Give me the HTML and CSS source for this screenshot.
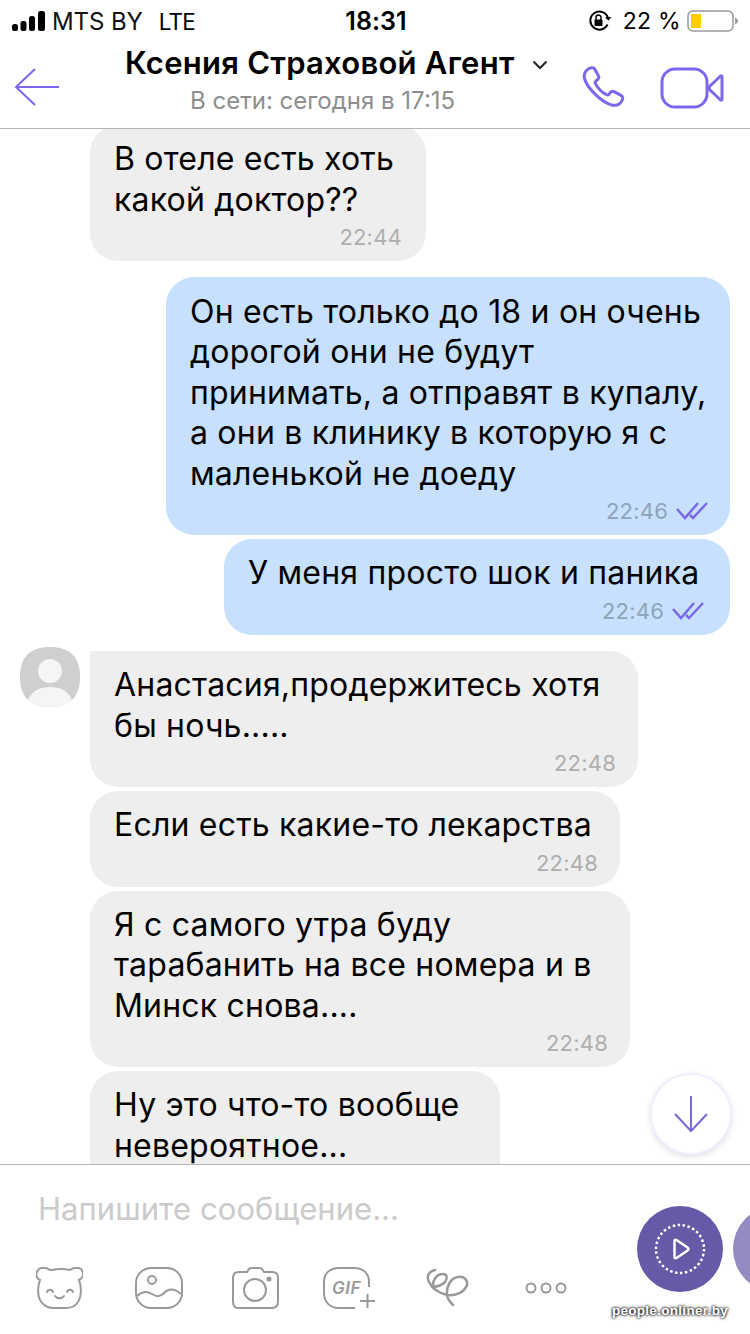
FILE: index.html
```html
<!DOCTYPE html>
<html lang="ru">
<head>
<meta charset="utf-8">
<title>Чат</title>
<link rel="stylesheet" href="styles.css">
</head>
<body>
<div class="app">
  <div class="status">
    <div class="status-left">
      <svg class="signal" width="36" height="22" viewBox="0 0 36 22"><rect x="2" y="14" width="6" height="7" rx="2.500"/><rect x="10.500" y="11" width="6" height="10" rx="2.500"/><rect x="19" y="6" width="6" height="15" rx="2.500"/><rect x="28" y="1" width="7" height="20" rx="2.500"/></svg>
      <span class="carrier">MTS BY</span>
      <span class="net">LTE</span>
    </div>
    <div class="status-time">18:31</div>
    <div class="status-right">
      <svg class="lock" width="24" height="22" viewBox="0 0 24 22" fill="none" stroke="#000" stroke-width="2"><path d="M19.500 14.500A9 9 0 1 1 20 8"/><path d="M17 7.500l3.500 3 3-3.500" fill="#000" stroke="none"/><rect x="6.500" y="9.500" width="8" height="6.500" rx="1" fill="#000" stroke="none"/><path d="M8 10V7.500a2.500 2.500 0 0 1 5 0V10" stroke-width="1.500"/></svg>
      <span class="pct">22 %</span>
      <svg class="battery" width="54" height="24" viewBox="0 0 54 24"><rect x="1" y="2" width="45" height="20" rx="5" fill="none" stroke="#999" stroke-width="1.500"/><rect x="4" y="5" width="10" height="14" fill="#fc0"/><path d="M48 8.500a4 4 0 0 1 3 3.500 4 4 0 0 1-3 3.500z" fill="#999"/></svg>
    </div>
  </div>

  <header class="nav">
    <svg class="back" width="46" height="40" viewBox="0 0 46 40" fill="none" stroke="#7b68ee" stroke-width="2"><path d="M21 2 2 20l19 18M2 20h43"/></svg>
    <div class="peer">
      <div class="peer-name"><span>Ксения Страховой Агент</span>
        <svg class="chev" width="16" height="10" viewBox="0 0 16 10" fill="none" stroke="#222" stroke-width="2"><path d="M1.500 1.500 8 8l6.500-6.500"/></svg>
      </div>
      <div class="peer-seen">В сети: сегодня в 17:15</div>
    </div>
    <svg class="phone" width="44" height="44" viewBox="0 0 44 44" fill="none" stroke="#7b68ee" stroke-width="3" stroke-linejoin="round"><path d="M7 2.500c3-1.500 5-1 6 1l3.500 6.500c.8 1.500.3 2.500-.8 3.500l-2 1.700c-.7.700-.8 1.500-.3 2.500 2.500 5 6 8.500 11 11 1.200.5 2 .3 2.600-.4l1.500-1.900c1-1.200 2-1.500 3.500-.8l7 3.800c2 1.100 2.300 3 .8 5.500-2 3.300-5 5-9 4.300C20 37 5 22 2.500 12.500 1.500 8 3.500 4.500 7 2.500z"/></svg>
    <svg class="video" width="64" height="44" viewBox="0 0 64 44" fill="none" stroke="#7b68ee" stroke-width="3" stroke-linejoin="round"><rect x="2" y="3" width="45" height="38" rx="13"/><path d="M62 11v22q0 2-2 .5L50 24q-2-2 0-4l10-9.500q2-1.500 2 .5z"/></svg>
  </header>

  <main class="chat">
    <div class="msg in w336 first">
      <p>В отеле есть хоть<br>какой доктор??</p>
      <div class="meta"><time>22:44</time></div>
    </div>
    <div class="msg out w564 gap">
      <p>Он есть только до 18 и он очень<br>дорогой они не будут<br>принимать, а отправят в купалу,<br>а они в клинику в которую я с<br>маленькой не доеду</p>
      <div class="meta"><time>22:46</time><svg class="ticks" width="32" height="20" viewBox="0 0 32 20" fill="none" stroke="#7b68ee" stroke-width="2.500"><path d="M1 8l8 9L22 2M14 14l3 3L31 2"/></svg></div>
    </div>
    <div class="msg out w506">
      <p>У меня просто шок и паника</p>
      <div class="meta"><time>22:46</time><svg class="ticks" width="32" height="20" viewBox="0 0 32 20" fill="none" stroke="#7b68ee" stroke-width="2.500"><path d="M1 8l8 9L22 2M14 14l3 3L31 2"/></svg></div>
    </div>
    <div class="group gap">
      <svg class="avatar" width="60" height="60" viewBox="0 0 60 60"><path d="M30 0c20 0 30 10 30 30S50 60 30 60 0 50 0 30 10 0 30 0z" fill="#cfcfcf"/><circle cx="30" cy="24" r="12" fill="#f5f5f5"/><path d="M8 53c4-10 13-13 22-13s18 3 22 13c-5 5-13 7-22 7S13 58 8 53z" fill="#f5f5f5"/></svg>
      <div class="stack">
        <div class="msg in w548 head">
          <p>Анастасия,продержитесь хотя<br>бы ночь.....</p>
          <div class="meta"><time>22:48</time></div>
        </div>
        <div class="msg in w530">
          <p>Если есть какие-то лекарства</p>
          <div class="meta"><time>22:48</time></div>
        </div>
        <div class="msg in w540">
          <p>Я с самого утра буду<br>тарабанить на все номера и в<br>Минск снова....</p>
          <div class="meta"><time>22:48</time></div>
        </div>
        <div class="msg in w410">
          <p>Ну это что-то вообще<br>невероятное...</p>
          <div class="meta"></div>
        </div>
      </div>
    </div>
    <button class="to-bottom" aria-label="Вниз">
      <svg width="36" height="38" viewBox="0 0 36 38" fill="none" stroke="#7b68d8" stroke-width="2"><path d="M18 1v35M2 19l16 17 16-17"/></svg>
    </button>
  </main>

  <footer class="composer">
    <div class="placeholder">Напишите сообщение...</div>
    <div class="tools">
      <svg class="t-bear" width="47" height="42" viewBox="0 0 47 42" fill="none" stroke="#999" stroke-width="2"><path d="M14 3C10 0 4 0 2 3-1 7 0 11 4 13 2 18 1 27 4 33c3 5 7 8 13 8h13c6 0 11-3 13-8 3-6 2-15 0-20 4-2 5-6 3-10-2-3-8-3-12 0-5-1-13-1-18 0z"/><path d="M11 25c1-3 5-3 6 0M31 25c1-3 5-3 6 0M19 29c2 3 7 3 9 0" stroke-linecap="round"/></svg>
      <svg class="t-image" width="48" height="42" viewBox="0 0 48 42" fill="none" stroke="#999" stroke-width="2"><rect x="1" y="1" width="46" height="40" rx="15"/><circle cx="17" cy="13" r="4"/><path d="M2 29c6-5 10-5 15-2s8 3 12-1 10-5 17 1"/></svg>
      <svg class="t-camera" width="48" height="42" viewBox="0 0 48 42" fill="none" stroke="#999" stroke-width="2"><path d="M16 5l2-3q1-1 3-1h7q2 0 3 1l2 3h8q6 0 6 6v23q0 7-6 7H7q-5 0-5-7V11q0-6 6-6z"/><circle cx="24" cy="23" r="11"/><circle cx="38" cy="12" r="1.500" fill="#999"/></svg>
      <div class="gif">
        <svg width="52" height="42" viewBox="0 0 52 42" fill="none" stroke="#999" stroke-width="2"><path d="M46 20v-5C46 6 40 1 31 1H16C7 1 1 6 1 15v11c0 9 6 15 15 15h16"/><path d="M44.500 27v14M37 34h15"/></svg>
        <span>GIF</span>
      </div>
      <svg class="t-doodle" width="44" height="40" viewBox="0 0 44 40" fill="none" stroke="#999" stroke-width="2.500" stroke-linecap="round"><path d="M9 2C3 3 0 8 3 14c3 6 10 11 18 13 8 1 17-2 20-10 1-5-3-9-9-8-7 1-12 9-11 18 0 4 3 7 6 10"/><path d="M8 21C5 14 10 6 17 6c4 0 5 4 2 8-3 3-8 5-13 5"/></svg>
      <svg class="t-dots" width="42" height="12" viewBox="0 0 42 12" fill="none" stroke="#999" stroke-width="2"><circle cx="6" cy="6" r="4.500"/><circle cx="21" cy="6" r="4.500"/><circle cx="36" cy="6" r="4.500"/></svg>
    </div>
    <button class="rec" aria-label="Запись">
      <svg width="54" height="54" viewBox="0 0 54 54" fill="none" stroke="#fff"><circle cx="27" cy="27" r="24" stroke-width="2.500" stroke-dasharray="2.500 2.500"/><path d="M21.500 19q0-2 2-1l11 7.500q2 1.500 0 3l-11 7.500q-2 1-2-1z" stroke-width="2.500" stroke-linejoin="round"/></svg>
    </button>
    <div class="rec2"></div>
    <div class="watermark">people.onliner.by</div>
  </footer>
</div>
</body>
</html>
```

FILE: styles.css
```css
* { box-sizing: border-box; }
html, body { margin: 0; padding: 0; background: #fff; }
body { font-family: Inter, Roboto, "Noto Sans", sans-serif; color: #000; }
svg { display: block; flex: none; }
.app { width: 750px; height: 1334px; display: flex; flex-direction: column; overflow: hidden; }

.status { height: 42px; flex: none; display: grid; grid-template-columns: 1fr auto 1fr; align-items: center; padding: 0 9px 0 10px; font-size: 24px; }
.status-left { display: flex; align-items: center; gap: 6px; letter-spacing: -.1px; }
.carrier { color: #111; }
.net { margin-left: 10px; font-size: 22.500px; letter-spacing: -.8px; }
.status-time { font-weight: 600; font-size: 25px; padding-left: 1px; letter-spacing: .1px; }
.status-right { display: flex; justify-content: flex-end; align-items: center; gap: 6px; }
.lock { margin-right: 5px; }
.pct { font-size: 23px; letter-spacing: .3px; }

.nav { height: 87px; flex: none; display: flex; align-items: flex-start; padding: 3px 0 0 14px; border-bottom: 1px solid #b5b5b5; position: relative; }
.back { margin-top: 22px; }
.peer { width: 511px; padding-left: 65px; }
.peer-name { display: flex; align-items: center; gap: 17px; font-size: 31px; line-height: 36px; font-weight: 600; white-space: nowrap; letter-spacing: .25px; }
.chev { margin-top: 4px; }
.peer-seen { margin-top: 5px; padding-left: 65px; font-size: 24px; line-height: 30px; color: #8e8e8e; }
.phone { margin: 21px 0 0 11px; }
.video { margin: 21px 0 0 34px; }

.chat { flex: 1; min-height: 0; position: relative; overflow: hidden; display: flex; flex-direction: column; align-items: flex-end; padding: 0 20px 0 20px; }
.msg { border-radius: 28px; padding: 14px 0 0 25px; flex: none; }
.msg p { margin: 0; font-size: 32px; line-height: 40.500px; white-space: nowrap; letter-spacing: .2px; margin-left: -1px; }
.meta { height: 41px; display: flex; justify-content: flex-end; align-items: center; gap: 8px; padding: 0 22px 7px 0; }
.meta time { font-size: 22px; letter-spacing: .2px; }
.in { background: #eeeeee; margin-top: 4px; }
.in .meta time { color: #aeaeae; }
.out { background: #c6e0fd; margin-top: 4px; }
.out .meta time { color: #8fa3b8; }
.first { align-self: flex-start; margin: -4px 0 0 70px; }
.first .meta { padding-right: 24px; }
.gap { margin-top: 16px; }
.w336 { width: 336px; }
.w564 { width: 564px; padding-top: 14.500px; }
.w564 .meta { padding-right: 22px; }
.w506 { width: 506px; }
.w506 .meta { height: 41.500px; padding-right: 26px; }
.w548 { width: 548px; }
.w530 { width: 530px; }
.w540 { width: 540px; }
.w410 { width: 410px; }
.group { align-self: stretch; display: flex; align-items: flex-start; gap: 10px; }
.avatar { margin-top: -4px; }
.stack { display: flex; flex-direction: column; align-items: flex-start; }
.head { margin-top: 0; border-top-left-radius: 0; }

.to-bottom { position: absolute; right: 18px; top: 944px; width: 82px; height: 82px; border-radius: 50%; background: #fff; border: 2px solid #f1eefe; box-shadow: 0 2px 6px rgba(0,0,0,.12); display: flex; align-items: center; justify-content: center; padding: 0; }

.composer { height: 170px; flex: none; border-top: 1px solid #b5b5b5; position: relative; background: #fff; padding: 24px 0 0 39px; }
.placeholder { font-size: 31px; line-height: 40px; letter-spacing: .05px; color: #cbcbcb; margin-left: -1px; }
.tools { display: flex; align-items: center; height: 46px; margin: 36px 0 0 -3px; }
.t-image { margin-left: 52px; }
.t-camera { margin-left: 48px; }
.gif { position: relative; width: 52px; height: 42px; margin-left: 44px; }
.gif span { position: absolute; left: 9px; top: 9px; font-size: 17px; line-height: 24px; font-weight: 600; font-style: italic; color: #999; letter-spacing: .5px; }
.t-doodle { margin-left: 51px; }
.t-dots { margin-left: 55px; }
.rec { position: absolute; left: 637px; top: 41px; width: 86px; height: 86px; border: 0; padding: 0; border-radius: 50%; background: #645aa8; display: flex; align-items: center; justify-content: center; }
.rec2 { position: absolute; left: 733px; top: 41px; width: 86px; height: 86px; border-radius: 50%; background: #958bc3; }
.watermark { position: absolute; right: 22px; top: 138px; font-family: "Liberation Sans", sans-serif; font-size: 13.500px; font-weight: 700; color: #fff; text-shadow: 0 0 3px #000, 0 0 3px #000; letter-spacing: .3px; }
```
